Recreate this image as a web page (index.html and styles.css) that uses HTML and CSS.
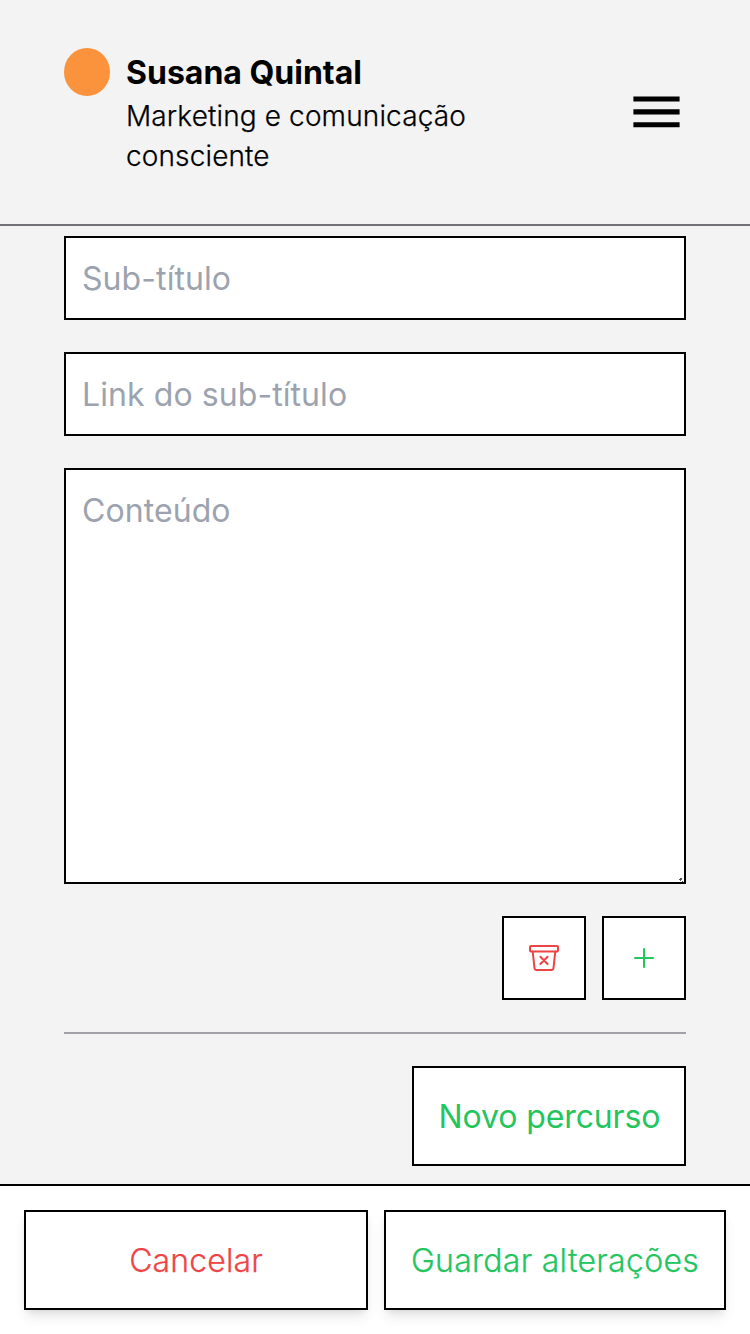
FILE: index.html
```html
<!DOCTYPE html>
<html lang="pt">
<head>
<meta charset="utf-8">
<title>Susana Quintal</title>
<link rel="stylesheet" href="styles.css">
</head>
<body>
<header class="header">
  <div class="brand">
    <span class="dot"></span>
    <div class="brand-text">
      <h1 class="name">Susana Quintal</h1>
      <p class="tagline">Marketing e comunicação consciente</p>
    </div>
  </div>
  <button class="menu" aria-label="Menu">
    <svg width="48" height="34" viewBox="0 0 48 34"><path d="M1.4 1.5h46.2v5.1H1.4zM1.4 14.3h46.2v5.2H1.4zM1.4 27.2h46.2v5.1H1.4z"/></svg>
  </button>
</header>
<main class="form">
  <input class="field" type="text" placeholder="Sub-título">
  <input class="field" type="text" placeholder="Link do sub-título">
  <div class="area-wrap">
    <textarea class="field area" placeholder="Conteúdo"></textarea>
    <svg class="grip" width="6" height="6" viewBox="0 0 6 6"><path d="M1 3h1V2h2v2H3v1H2V4H1zM4 5h1v1H4z"/></svg>
  </div>
  <div class="tools">
    <button class="tool tool-delete" aria-label="Eliminar">
      <svg width="32" height="32" viewBox="0 0 32 32"><rect x="2" y="4" width="28" height="5.4" rx="1"/><path d="M4.7 9.4 6.5 26.2a2 2 0 0 0 2 1.8h15a2 2 0 0 0 2-1.8L27.3 9.4M12.4 14.8l7.2 7.2M19.6 14.8l-7.2 7.2"/></svg>
    </button>
    <button class="tool tool-add" aria-label="Adicionar">
      <svg width="32" height="32" viewBox="0 0 32 32"><path d="M16 7v18M7 16h18"/></svg>
    </button>
  </div>
  <hr class="divider">
  <button class="button new">Novo percurso</button>
</main>
<footer class="footer">
  <button class="button light cancel">Cancelar</button>
  <button class="button light save">Guardar alterações</button>
</footer>
</body>
</html>
```

FILE: styles.css
```css
* {
  box-sizing: border-box;
  margin: 0;
}

body {
  display: flex;
  flex-direction: column;
  height: 1334px;
  overflow: hidden;
  background: #f3f3f3;
  color: #000;
  font-family: Inter, sans-serif;
  font-size: 32px;
  line-height: 48px;
}

button,
input,
textarea {
  font: inherit;
  border-radius: 0;
}

svg {
  display: block;
}

.header {
  display: flex;
  align-items: center;
  justify-content: space-between;
  height: 226px;
  padding: 48px 70px 48px 64px;
  border-bottom: 2px solid #71717a;
}

.brand {
  display: flex;
  gap: 16px;
}

.dot {
  width: 46px;
  height: 48px;
  border-radius: 50%;
  background: #fb923c;
}

.brand-text {
  width: 380px;
}

.name {
  height: 48px;
  padding-top: 1px;
  font-size: 32px;
  font-weight: 700;
  line-height: 48px;
}

.tagline {
  font-size: 28px;
  font-weight: 300;
  line-height: 40px;
  letter-spacing: 0.13px;
  -webkit-text-stroke: 0.25px currentColor;
}

.menu {
  padding: 0;
  border: 0;
  background: none;
}

.form {
  display: flex;
  flex: 1;
  flex-direction: column;
  gap: 32px;
  padding: 10px 64px 0;
}

.field {
  display: block;
  width: 100%;
  height: 84px;
  padding: 16px;
  border: 2px solid #000;
  background: #fff;
  letter-spacing: 0.08px;
  outline: none;
}

.field::placeholder {
  color: #9ca3af;
  opacity: 1;
}

.area-wrap {
  position: relative;
}

.area {
  height: 416px;
  padding-top: 17px;
  resize: none;
}

.grip {
  position: absolute;
  right: 2px;
  bottom: 2px;
  fill: #555;
}

.tools {
  display: flex;
  justify-content: flex-end;
  gap: 16px;
}

.tool {
  display: grid;
  place-items: center;
  width: 84px;
  height: 84px;
  padding: 0;
  border: 2px solid #000;
  background: #fff;
}

.tool svg {
  fill: none;
  stroke: currentColor;
  stroke-width: 2;
  stroke-linecap: round;
  stroke-linejoin: round;
}

.tool-delete,
.cancel {
  color: #ef4444;
}

.tool-add,
.new,
.save {
  color: #22c55e;
}

.divider {
  width: 100%;
  height: 2px;
  border: 0;
  background: #a1a1aa;
}

.button {
  height: 100px;
  padding: 2px 0 0;
  border: 2px solid #000;
  background: #fff;
  white-space: nowrap;
}

.new {
  align-self: flex-end;
  width: 274px;
  padding-left: 1px;
  letter-spacing: -0.12px;
}

.light {
  font-weight: 300;
  letter-spacing: 0.12px;
  -webkit-text-stroke: 0.25px currentColor;
  box-shadow: 0 8px 12px -2px rgba(0, 0, 0, 0.1), 0 4px 8px -4px rgba(0, 0, 0, 0.1);
}

.save {
  letter-spacing: 0.28px;
}

.footer {
  display: grid;
  grid-template-columns: 344px 342px;
  gap: 16px;
  height: 150px;
  padding: 24px;
  border-top: 2px solid #000;
  background: #fff;
}
```
